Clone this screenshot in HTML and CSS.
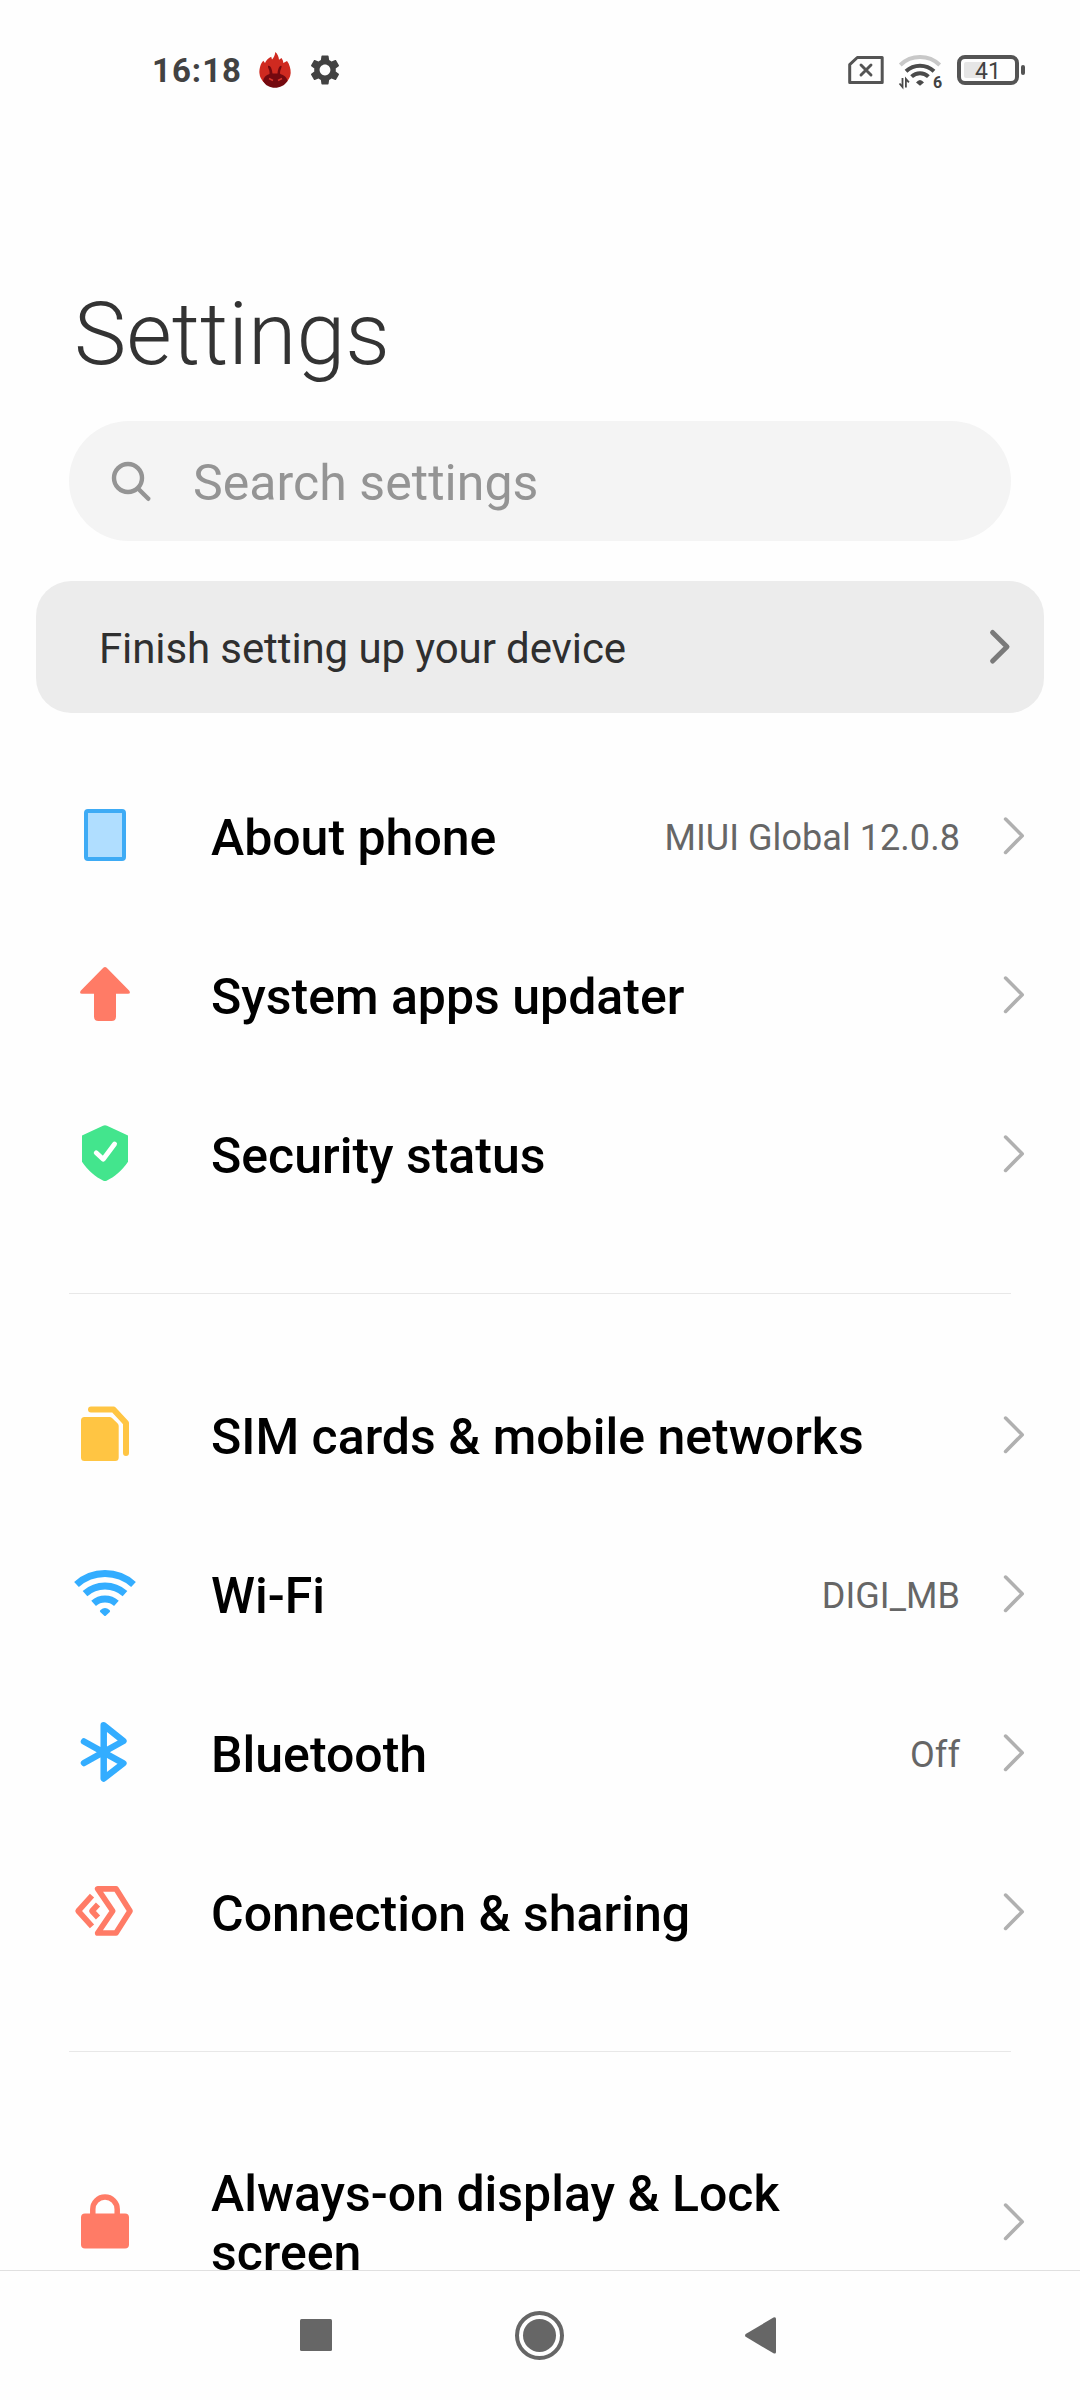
FILE: index.html
```
<!DOCTYPE html>
<html lang="en">
<head>
  <meta charset="UTF-8">
  <meta name="viewport" content="width=device-width, initial-scale=1.0">
  <title>Settings</title>
  <link rel="stylesheet" href="styles.css">
</head>
<body>
  <header class="status-bar">
    <div class="status-left">
      <span class="time">16:18</span>
      <svg width="36" height="40" viewBox="0 0 36 40">
        <path fill="#cf2a20" d="M2.4 23C2.2 19 3.4 13.5 6.3 10.7L8 13C9 10.500 11 8 14.200 6.700L15 9.500C16.800 7.500 18 5 18.300 2C20.500 4 21.800 6.500 22 9.700L24.500 8C25.500 9.500 26.300 11 26.300 13L30 11C32.500 14 33.800 19 33.700 23A15.700 15 0 0 1 2.400 23Z"/>
        <path fill="#74090f" d="M6 31C6.500 27.500 9 25 12.500 24C13 20 10.800 18.500 11 16C13 15 15 18 15.500 23.500H20.500C21 18 23 15 24.500 16C24.800 18.500 22.700 20 23.200 24C27 25 30 27.500 30.500 31C27.500 35.500 23 37.800 18 37.800S8.500 35.500 6 31Z"/>
        <path stroke="#d8332a" stroke-width="1.500" d="M12 28.500L16 30.500M25 28.500L21 30.500"/>
      </svg>
      <svg width="34" height="40" viewBox="0 0 34 40">
        <path transform="translate(-1 2) scale(1.5)" fill="#424242" d="M19.140 12.940c.04-.3.060-.61.060-.94 0-.32-.02-.64-.07-.94l2.030-1.580c.18-.14.230-.41.120-.61l-1.920-3.320c-.12-.22-.37-.29-.59-.22l-2.390.96c-.5-.38-1.030-.7-1.620-.94l-.36-2.540c-.04-.24-.24-.41-.48-.41h-3.840c-.24 0-.43.17-.47.41l-.36 2.540c-.59.24-1.130.57-1.620.94l-2.390-.96c-.22-.08-.47 0-.59.22L2.740 8.870c-.12.21-.08.470.120.610l2.030 1.580c-.05.3-.09.630-.09.940s.02.640.070.940l-2.030 1.580c-.18.14-.23.410-.12.610l1.920 3.320c.12.220.370.290.590.220l2.390-.96c.5.380 1.030.7 1.620.940l.36 2.540c.05.240.240.410.480.410h3.840c.24 0 .44-.17.47-.41l.36-2.540c.59-.24 1.130-.56 1.620-.94l2.390.96c.22.080.470 0 .59-.22l1.920-3.320c.12-.22.070-.47-.12-.61l-2.010-1.580zM12 15.600c-1.980 0-3.600-1.620-3.600-3.600s1.620-3.600 3.600-3.600 3.600 1.620 3.600 3.600-1.620 3.600-3.600 3.600z"/>
      </svg>
    </div>
    <div class="status-right">
      <svg width="38" height="40" viewBox="0 0 38 40" fill="none" stroke="#545454" stroke-linejoin="round" stroke-linecap="round">
        <path stroke-width="3" d="M10.300 7.500H35.200V32.500H2.700V14.700Z"/>
        <path stroke-width="2.900" d="M14 15L24 25M24 15L14 25"/>
      </svg>
      <svg width="47" height="40" viewBox="0 0 47 40" fill="none" stroke="#4a4a4a" stroke-width="4">
        <path stroke="#c8c8c8" d="M3.300 15A28.500 28.500 0 0 1 42.700 15"/>
        <path d="M9 21.300A20.500 20.500 0 0 1 37 21.300"/>
        <path d="M14.600 26.600A12.300 12.300 0 0 1 31.400 26.600"/>
        <path stroke="none" fill="#4a4a4a" d="M23 35.700L19 32.500Q23 27.500 27 32.500Z"/>
        <path stroke-width="1.800" d="M5.500 28V37L2.500 33.500M8.900 37.500V29L11.900 32.400"/>
        <text class="wifi-gen" x="36" y="37.800">6</text>
      </svg>
      <svg width="72" height="40" viewBox="0 0 72 40">
        <rect x="3" y="7" width="58" height="26" rx="6" fill="none" stroke="#545454" stroke-width="4"/>
        <rect x="8" y="12" width="21" height="16" rx="2" fill="#e6e6e6"/>
        <rect x="65" y="15" width="4" height="10" rx="2" fill="#545454"/>
        <text class="battery-level" x="19" y="29">41</text>
      </svg>
    </div>
  </header>

  <main class="content">
    <h1>Settings</h1>

    <div class="search">
      <svg width="42" height="42" viewBox="0 0 42 42" fill="none" stroke="#949494" stroke-width="4.400" stroke-linecap="round">
        <circle cx="19" cy="18" r="14"/>
        <path d="M29 28.500L39.300 38.800"/>
      </svg>
      <span>Search settings</span>
    </div>

    <div class="setup">
      <span>Finish setting up your device</span>
      <svg width="24" height="40" viewBox="0 0 24 40" fill="none" stroke="#7a7a7a" stroke-width="5" stroke-linecap="round" stroke-linejoin="round">
        <path d="M4.600 5.500L19 19.700L4.600 34"/>
      </svg>
    </div>

    <section class="group">
      <div class="row">
        <svg class="icon" viewBox="0 0 72 73">
          <rect x="17" y="12" width="38" height="48" rx="2" fill="#b0deff" stroke="#3eabf5" stroke-width="4"/>
        </svg>
        <span class="label">About phone</span>
        <span class="value">MIUI Global 12.0.8</span>
        <svg class="chevron" viewBox="0 0 24 41"><path d="M3.600 4.100L20.200 20.700L3.600 37.400"/></svg>
      </div>
      <div class="row">
        <svg class="icon" viewBox="0 0 72 73">
          <path fill="#ff7b66" d="M34.300 9.800Q36 8.200 37.700 9.800L60.300 32.800Q62 35.500 59 35.700H47V58.500Q47 63 42.500 63H29.500Q25 63 25 58.500V35.700H13Q10 35.500 11.700 32.800Z"/>
        </svg>
        <span class="label">System apps updater</span>
        <svg class="chevron" viewBox="0 0 24 41"><path d="M3.600 4.100L20.200 20.700L3.600 37.400"/></svg>
      </div>
      <div class="row">
        <svg class="icon" viewBox="0 0 72 73">
          <path fill="#43e58d" d="M34 8.800Q36 7.500 38 8.800L59 18.500V44.700C53 54 45 60 38 63.500Q36 64.500 34 63.500C27 60 19 54 13 44.700V18.500Z"/>
          <path fill="none" stroke="#fff" stroke-width="4.800" stroke-linecap="round" stroke-linejoin="round" d="M27.200 35.800L34.200 42.200L45.600 27"/>
        </svg>
        <span class="label">Security status</span>
        <svg class="chevron" viewBox="0 0 24 41"><path d="M3.600 4.100L20.200 20.700L3.600 37.400"/></svg>
      </div>
    </section>

    <hr>

    <section class="group">
      <div class="row">
        <svg class="icon" viewBox="0 1 72 73">
          <path fill="#ffc543" d="M15.500 20H40.500Q42 20 43 21L48.700 26.500Q49.700 27.500 49.700 29V60.500Q49.700 64 46.200 64H15.500Q12 64 12 60.500V23.500Q12 20 15.500 20Z"/>
          <path fill="none" stroke="#ffc543" stroke-width="6" stroke-linecap="round" stroke-linejoin="round" d="M22 12.500H44.500L57 26V56"/>
        </svg>
        <span class="label">SIM cards &amp; mobile networks</span>
        <svg class="chevron" viewBox="0 0 24 41"><path d="M3.600 4.100L20.200 20.700L3.600 37.400"/></svg>
      </div>
      <div class="row">
        <svg class="icon" viewBox="0 1 72 73" fill="none" stroke="#33adff" stroke-width="7">
          <path d="M7.500 28.500A42.500 42.500 0 0 1 64.500 28.500"/>
          <path d="M16 37.600A30 30 0 0 1 56 37.600"/>
          <path d="M24.600 47.400A17 17 0 0 1 47.400 47.400"/>
          <path fill="#33adff" stroke="none" d="M37 59.600Q36 60.600 35 59.600L31.200 56Q30.400 55 31.500 54Q36 50 40.500 54Q41.600 55 40.800 56Z"/>
        </svg>
        <span class="label">Wi-Fi</span>
        <span class="value">DIGI_MB</span>
        <svg class="chevron" viewBox="0 0 24 41"><path d="M3.600 4.100L20.200 20.700L3.600 37.400"/></svg>
      </div>
      <div class="row">
        <svg class="icon" viewBox="0 1 72 73">
          <path fill="none" stroke="#33adff" stroke-width="6.500" stroke-linecap="round" stroke-linejoin="round" d="M15 26.500L54.400 48.300L34.700 63.500V10.200L54.400 26L15 48"/>
        </svg>
        <span class="label">Bluetooth</span>
        <span class="value">Off</span>
        <svg class="chevron" viewBox="0 0 24 41"><path d="M3.600 4.100L20.200 20.700L3.600 37.400"/></svg>
      </div>
      <div class="row">
        <svg class="icon" viewBox="0 1 72 73" fill="none" stroke="#ff7b66" stroke-width="5.700" stroke-linejoin="round">
          <path d="M28.700 14.800H47L61 37L47 59H28.700L43.700 37Z"/>
          <path d="M23 21.700L9.200 37L23 52.300"/>
          <path d="M29 30.500L23 37L29 43.500"/>
        </svg>
        <span class="label">Connection &amp; sharing</span>
        <svg class="chevron" viewBox="0 0 24 41"><path d="M3.600 4.100L20.200 20.700L3.600 37.400"/></svg>
      </div>
    </section>

    <hr class="last">

    <section class="group">
      <div class="row">
        <svg class="icon" viewBox="0 0 72 73">
          <rect x="12" y="28.500" width="48" height="35" rx="4" fill="#ff7b66"/>
          <path fill="none" stroke="#ff7b66" stroke-width="5.500" d="M23.800 31V24.200A12.200 12.200 0 0 1 48.200 24.200V31"/>
        </svg>
        <span class="label">Always-on display &amp; Lock<br>screen</span>
        <svg class="chevron" viewBox="0 0 24 41"><path d="M3.600 4.100L20.200 20.700L3.600 37.400"/></svg>
      </div>
    </section>
  </main>

  <nav class="nav-bar">
    <svg width="60" height="60" viewBox="0 0 60 60"><rect x="14" y="14" width="32" height="32" rx="1.500"/></svg>
    <svg width="60" height="60" viewBox="0 0 60 60">
      <circle cx="29.500" cy="30.400" r="22.500" fill="none" stroke="#666" stroke-width="4"/>
      <circle cx="29.500" cy="30.400" r="16.500"/>
    </svg>
    <svg width="60" height="60" viewBox="0 0 60 60"><path d="M11.700 29L39.500 12.500Q42 11.600 42 14V47Q42 49.200 39.500 48.300L11.700 31.700Q10.400 30.400 11.700 29Z"/></svg>
  </nav>
</body>
</html>
```

FILE: styles.css
```
* {
  box-sizing: border-box;
}
body {
  margin: 0;
  height: 2400px;
  display: flex;
  flex-direction: column;
  overflow: hidden;
  background-color: #fefefe;
  font-family: Roboto, sans-serif;
  color: #000;
}
svg {
  display: block;
  flex-shrink: 0;
  overflow: visible;
}

/* status bar */
.status-bar {
  height: 140px;
  flex-shrink: 0;
  display: flex;
  justify-content: space-between;
  align-items: center;
  padding: 0 52px 0 152px;
}
.status-left {
  display: flex;
  align-items: center;
  gap: 15px;
}
.status-right {
  display: flex;
  gap: 12px;
}
.time {
  width: 90px;
  padding-top: 2px;
  font-size: 33px;
  font-weight: 700;
  letter-spacing: 1px;
  line-height: 40px;
  color: #424242;
}
.wifi-gen {
  font-size: 16px;
  font-weight: 700;
  fill: #424242;
  stroke: none;
}
.battery-level {
  font-size: 23px;
  font-weight: 400;
  fill: #424242;
}

/* settings list */
.content {
  flex: 1;
  min-height: 0;
  overflow: hidden;
}
h1 {
  margin: 142px 0 35px 74px;
  font-size: 88px;
  font-weight: 300;
  line-height: 104px;
  color: #333;
}
.search {
  height: 120px;
  margin: 0 69px 40px;
  padding-left: 40px;
  display: flex;
  align-items: center;
  gap: 42px;
  border-radius: 60px;
  background-color: #f4f4f4;
  font-size: 50px;
  letter-spacing: 0.05px;
  color: #949494;
}
.search span {
  padding-top: 4px;
}
.setup {
  height: 132px;
  margin: 0 36px 43px;
  padding: 0 32px 0 63px;
  display: flex;
  align-items: center;
  justify-content: space-between;
  border-radius: 35px;
  background-color: #ececec;
  font-size: 42px;
  letter-spacing: -0.1px;
  color: #2f2f2f;
}
.setup span {
  padding-top: 3px;
}
.row {
  display: flex;
  align-items: center;
  padding: 50px 54px 50px 69px;
}
.icon {
  width: 72px;
  height: 73px;
  margin: -7px 70px -7px 0;
}
.label {
  padding-top: 3px;
  margin-bottom: -3px;
  font-size: 50px;
  font-weight: 500;
  line-height: 59px;
}
.value {
  margin-left: auto;
  padding-top: 4px;
  font-size: 36px;
  letter-spacing: 0.06px;
  color: #666;
}
.chevron {
  width: 24px;
  height: 41px;
  margin-left: auto;
  fill: none;
  stroke: #b0b0b0;
  stroke-width: 3.600;
  stroke-linecap: round;
  stroke-linejoin: round;
}
.value + .chevron {
  margin-left: 42px;
}
hr {
  height: 1px;
  margin: 60px 69px 61px;
  border: none;
  background-color: #e8e8e8;
}
hr.last {
  margin-bottom: 60px;
}

/* navigation buttons */
.nav-bar {
  height: 130px;
  flex-shrink: 0;
  display: flex;
  justify-content: center;
  align-items: center;
  gap: 164px;
  padding-bottom: 1px;
  border-top: 1px solid #e0e0e0;
  fill: #666;
}
```
